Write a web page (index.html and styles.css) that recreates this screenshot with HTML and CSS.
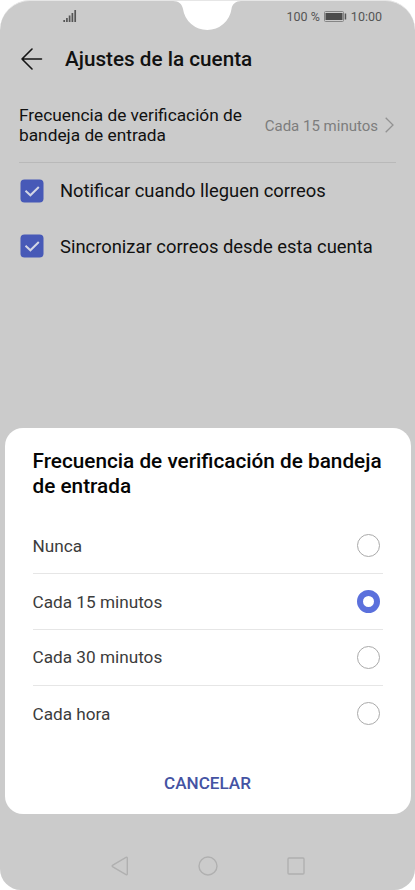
FILE: index.html
```html
<!DOCTYPE html>
<html lang="es">
  <head>
    <meta charset="UTF-8" />
    <meta name="viewport" content="width=device-width, initial-scale=1.0" />
    <title>Ajustes de la cuenta</title>
    <link rel="stylesheet" href="styles.css" />
  </head>
  <body>
    <div class="phone">
      <!-- notch -->
      <svg class="notch" width="68" height="31" viewBox="0 0 68 31">
        <path d="M0 0H68V1C63 1 59 4 58.5 9A24.5 24.5 0 0 1 10 9C9 4 6 1 0 1Z" fill="#fff" />
      </svg>

      <div class="status-bar">
        <svg class="signal" width="14" height="12" viewBox="0 0 14 12">
          <path d="M1.2 10v2M3.9 8v4M6.6 5.5v6.5M9.4 3v9M12.2 0v12" stroke="#555" stroke-width="1.7" fill="none" />
        </svg>
        <div class="status-right">
          <span>100 %</span>
          <svg width="23" height="11" viewBox="0 0 23 11">
            <rect x="0.5" y="0.5" width="19" height="10" rx="1" fill="none" stroke="#858585" />
            <rect x="1.5" y="2" width="17" height="7" fill="#4c4c4c" />
            <rect x="20.7" y="2.5" width="1.5" height="6" fill="#555" />
          </svg>
          <span>10:00</span>
        </div>
      </div>

      <div class="header">
        <svg width="22" height="22" viewBox="0 0 22 22" fill="none" stroke="#151515" stroke-width="1.6" stroke-linecap="round" stroke-linejoin="round">
          <path d="M11 1L1 11L11 21M1 11H20.5" />
        </svg>
        <h1>Ajustes de la cuenta</h1>
      </div>

      <div class="setting">
        <div class="setting-name">Frecuencia de verificación de<br />bandeja de entrada</div>
        <div class="setting-value">Cada 15 minutos</div>
        <svg width="9" height="16" viewBox="0 0 9 16" fill="none" stroke="#929292" stroke-width="1.3">
          <path d="M0.7 0.7L8 8L0.7 15.3" />
        </svg>
      </div>

      <div class="check-row">
        <svg width="24" height="24" viewBox="0 0 24 24">
          <rect x="0.5" y="0.5" width="23" height="23" rx="4" fill="#4759b7" />
          <path d="M5.5 11.8L10.4 16.3L18.8 8" fill="none" stroke="#d2d5e5" stroke-width="2" />
        </svg>
        <span>Notificar cuando lleguen correos</span>
      </div>
      <div class="check-row">
        <svg width="24" height="24" viewBox="0 0 24 24">
          <rect x="0.5" y="0.5" width="23" height="23" rx="4" fill="#4759b7" />
          <path d="M5.5 11.8L10.4 16.3L18.8 8" fill="none" stroke="#d2d5e5" stroke-width="2" />
        </svg>
        <span>Sincronizar correos desde esta cuenta</span>
      </div>

      <!-- bottom navigation -->
      <div class="nav-bar">
        <svg width="18" height="20" viewBox="0 0 18 20">
          <path d="M1.8 9.2L15 1.4Q16.3 0.8 16.3 2.2V17.8Q16.3 19.2 15 18.6L1.8 10.8Q0.5 10 1.8 9.2Z" />
        </svg>
        <svg width="20" height="20" viewBox="0 0 20 20">
          <circle cx="10" cy="10" r="9" />
        </svg>
        <svg width="18" height="18" viewBox="0 0 18 18">
          <rect x="1" y="1" width="16" height="16" rx="1" />
        </svg>
      </div>

      <!-- dialog -->
      <div class="dialog">
        <h2>Frecuencia de verificación de bandeja<br />de entrada</h2>
        <div class="options">
          <div class="option"><span>Nunca</span><i class="radio"></i></div>
          <div class="option"><span>Cada 15 minutos</span><i class="radio selected"></i></div>
          <div class="option"><span>Cada 30 minutos</span><i class="radio"></i></div>
          <div class="option"><span>Cada hora</span><i class="radio"></i></div>
        </div>
        <div class="cancel">CANCELAR</div>
      </div>
    </div>
  </body>
</html>
```

FILE: styles.css
```css
* {
  box-sizing: border-box;
}

body {
  margin: 0;
  background: #fff;
  font-family: Roboto, sans-serif;
  color: #111;
}

h1,
h2 {
  margin: 0;
  font-weight: 500;
  white-space: nowrap;
}

svg {
  display: block;
  flex: none;
}

.phone {
  position: relative;
  display: flex;
  flex-direction: column;
  width: 415px;
  height: 890px;
  background: #cbcbcb;
  border-top: 1px solid #e6e6e6;
  border-radius: 30px 30px 21px 21px;
  overflow: hidden;
}

.notch {
  position: absolute;
  top: -1px;
  left: 173px;
}

.status-bar {
  display: flex;
  justify-content: space-between;
  align-items: center;
  height: 30px;
  padding: 0 33px 0 63px;
  font-size: 12.5px;
  color: #555;
}

.status-right {
  display: flex;
  align-items: center;
  gap: 4px;
}

.header {
  display: flex;
  align-items: center;
  gap: 22px;
  height: 55px;
  padding-left: 21px;
}

.header h1 {
  font-size: 20.7px;
}

.setting {
  display: flex;
  align-items: center;
  height: 77px;
  margin: 0 19px;
  border-bottom: 1px solid #b9b9b9;
  white-space: nowrap;
}

.setting-name {
  flex: 1;
  padding-top: 2px;
  font-size: 17.3px;
  line-height: 20.5px;
}

.setting-value {
  margin-right: 7px;
  padding-top: 3px;
  font-size: 15px;
  color: #7d7d7d;
}

.setting svg {
  margin: 2px 2px 0 0;
}

.check-row {
  display: flex;
  align-items: center;
  gap: 16px;
  height: 55.5px;
  padding-left: 20px;
  font-size: 18.4px;
  white-space: nowrap;
}

.nav-bar {
  display: flex;
  justify-content: center;
  align-items: center;
  gap: 69px;
  height: 48px;
  margin-top: auto;
  fill: none;
  stroke: #b0b0b0;
  stroke-width: 1.4;
}

.dialog {
  position: absolute;
  top: 427.4px;
  left: 4.5px;
  width: 406px;
  height: 386px;
  padding: 21px 28px 0 28px;
  background: #fff;
  border-radius: 18px;
}

.dialog h2 {
  font-size: 20.75px;
  line-height: 24.5px;
  color: #050505;
}

.options {
  margin-top: 20px;
}

.option {
  display: flex;
  justify-content: space-between;
  align-items: center;
  height: 55.8px;
  padding-right: 3px;
  border-bottom: 1px solid #e6e6e6;
  font-size: 17.2px;
  color: #3c3c3c;
}

.option:last-child {
  border-bottom: none;
}

.radio {
  width: 23px;
  height: 23px;
  border: 1px solid #aaa;
  border-radius: 50%;
}

.radio.selected {
  border: 6px solid #5b70dc;
}

.cancel {
  margin-top: 30px;
  font-size: 17.1px;
  font-weight: 500;
  line-height: 22px;
  text-align: center;
  color: #4453a3;
}
```
